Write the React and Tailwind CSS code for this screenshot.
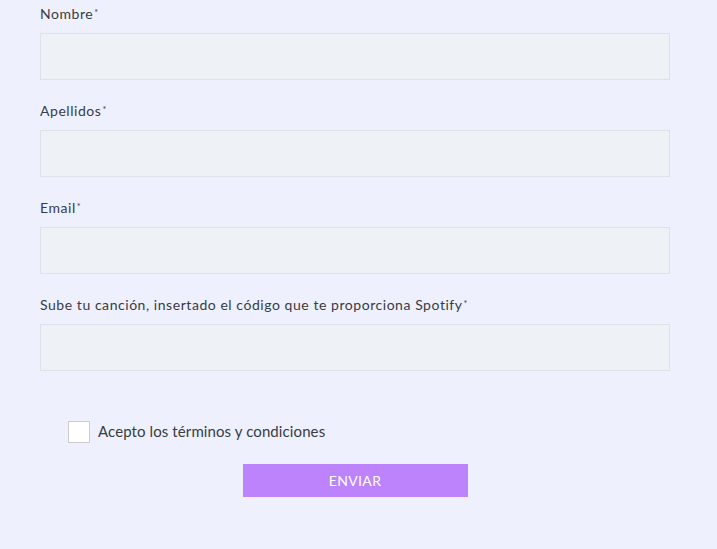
export default function App() {
    const fields = [
        'Nombre',
        'Apellidos',
        'Email',
        'Sube tu canción, insertado el código que te proporciona Spotify',
    ];

    return (
        <div
            className="min-h-[549px] w-full bg-[#eff0fd] text-[#363c44]"
            style={{ fontFamily: 'Lato, "Open Sans", sans-serif' }}
        >
            <form className="flex flex-col px-[40px] pt-[4px] w-[710px]" onSubmit={e => e.preventDefault()}>
                {fields.map(label => (
                    <div key={label} className="flex flex-col mb-[21px]">
                        <label className="text-[14px] leading-5 mb-[9px] tracking-[0.55px]">
                            {label}
                            <span className="text-[9px] align-top relative top-[-1px] ml-[1px]">*</span>
                        </label>
                        <input
                            type="text"
                            className="h-[47px] w-[630px] bg-[#eef1f5] border border-[#dde2e8] outline-none px-3"
                        />
                    </div>
                ))}

                {/* Terms checkbox */}
                <label className="flex items-center gap-[8px] ml-[28px] mt-[29px]">
                    <span className="w-[22px] h-[22px] bg-white border border-[#cccccc] inline-block"></span>
                    <span className="text-[15px] leading-5 tracking-[0.1px] relative top-[-1px]">Acepto los términos y condiciones</span>
                </label>

                <div className="flex justify-center mt-[21px] w-[630px]">
                    <button
                        type="submit"
                        className="w-[225px] h-[33px] bg-[#bc83fd] text-white text-[14px] tracking-wide"
                    >
                        ENVIAR
                    </button>
                </div>
            </form>
        </div>
    );
}
